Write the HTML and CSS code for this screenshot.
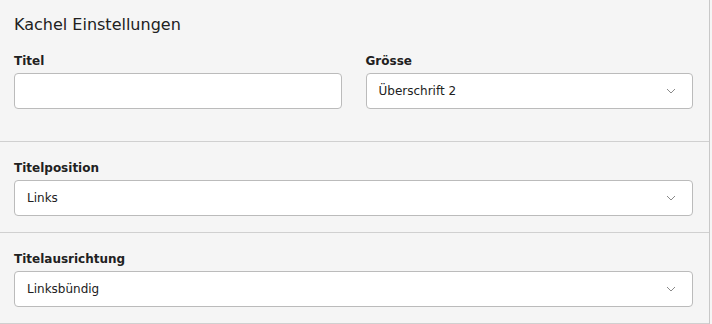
FILE: index.html
```html
<!DOCTYPE html>
<html lang="de">
<head>
  <meta charset="UTF-8" />
  <title>Kachel Einstellungen</title>
  <link rel="stylesheet" href="styles.css">
</head>
<body>

<div class="panel">
  <div class="panel-section first">
    <h2 class="panel-title">Kachel Einstellungen</h2>
    <div class="form-row">
      <div class="form-group">
        <label class="form-label" for="titel">Titel</label>
        <input class="form-control" type="text" id="titel">
      </div>
      <div class="form-group">
        <span class="form-label">Grösse</span>
        <div class="form-control form-select">
          <span>Überschrift 2</span>
          <svg class="chevron" viewBox="0 0 10 6"><path d="M1 1l4 4 4-4" /></svg>
        </div>
      </div>
    </div>
  </div>

  <div class="panel-section">
    <span class="form-label">Titelposition</span>
    <div class="form-control form-select">
      <span>Links</span>
      <svg class="chevron" viewBox="0 0 10 6"><path d="M1 1l4 4 4-4" /></svg>
    </div>
  </div>

  <div class="panel-section">
    <span class="form-label">Titelausrichtung</span>
    <div class="form-control form-select">
      <span>Linksbündig</span>
      <svg class="chevron" viewBox="0 0 10 6"><path d="M1 1l4 4 4-4" /></svg>
    </div>
  </div>
</div>

</body>
</html>
```

FILE: styles.css
```css
body {
  margin: 0;
  padding: 0;
  background-color: #f5f5f5;
  font-family: "DejaVu Sans", Verdana, sans-serif;
  color: #212121;
}

.panel {
  width: 709px;
  border-right: 1px solid #c8c8c8;
  background-color: #f5f5f5;
}

.panel-section {
  padding: 17px 16px 16px 14px;
  border-bottom: 1px solid #d0d0d0;
}

.panel-section.first {
  padding-top: 15px;
  padding-bottom: 32px;
}

.panel-title {
  margin: 0 0 17px 0;
  font-size: 16px;
  line-height: 20px;
  font-weight: normal;
}

.form-row {
  display: grid;
  grid-template-columns: 1fr 1fr;
  gap: 24px;
}

.form-label {
  display: block;
  font-size: 12px;
  line-height: 18px;
  font-weight: bold;
  margin-bottom: 3px;
}

.form-control {
  display: block;
  box-sizing: border-box;
  width: 100%;
  height: 36px;
  padding: 0 12px;
  border: 1px solid #bbbbbb;
  border-radius: 4px;
  background-color: #fff;
  font-family: inherit;
  font-size: 12px;
  color: #212121;
  outline: none;
}

.form-select {
  display: flex;
  align-items: center;
  justify-content: space-between;
  padding-right: 16px;
  cursor: pointer;
}

.chevron {
  width: 10px;
  height: 6px;
  fill: none;
  stroke: #8a8a8a;
  stroke-width: 1;
}
```
